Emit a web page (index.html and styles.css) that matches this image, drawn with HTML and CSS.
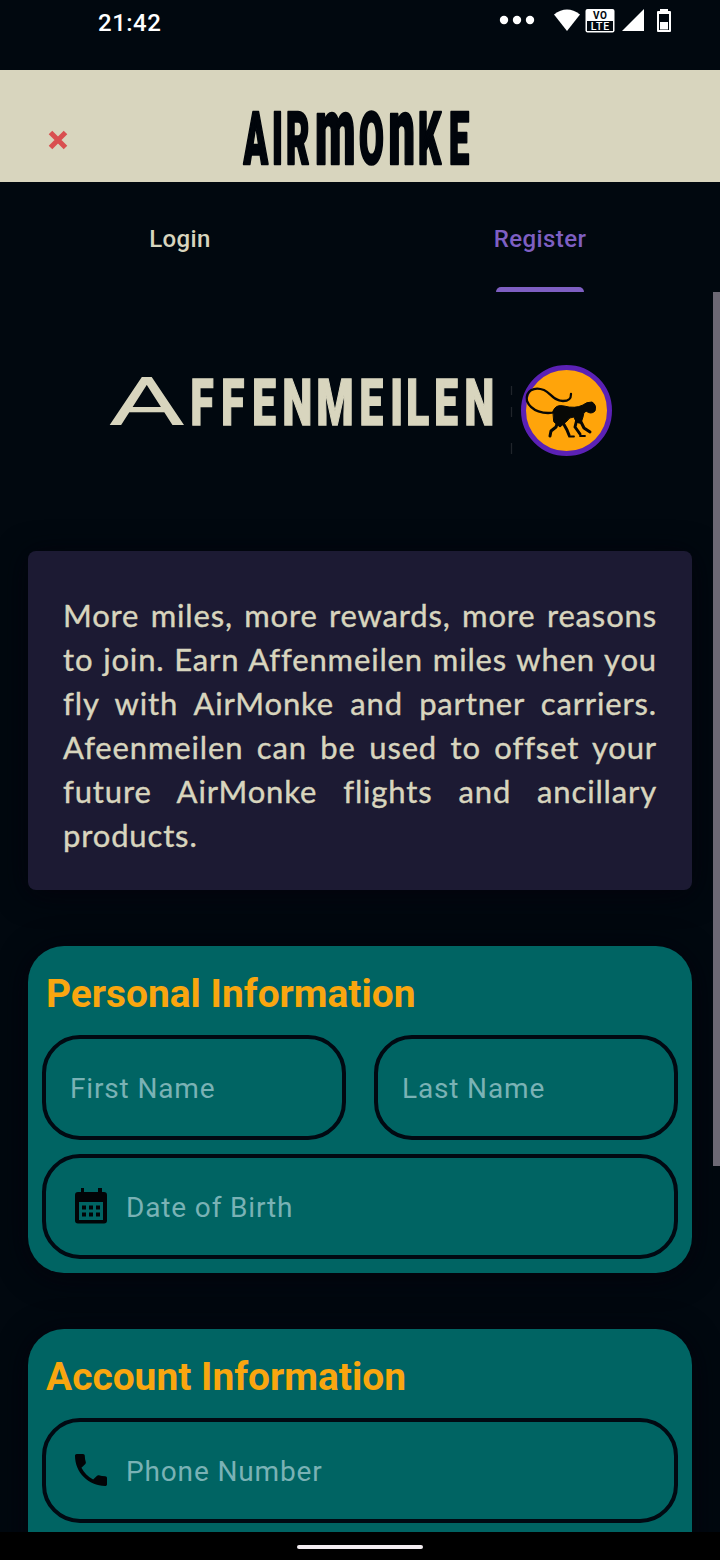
FILE: index.html
```html
<!DOCTYPE html>
<html lang="en">
<head>
<meta charset="utf-8">
<title>AirMonke – Register</title>
<link rel="stylesheet" href="styles.css">
</head>
<body>
<div class="screen">
  <div class="status">
    <span class="clock">21:42</span>
    <svg class="status-icons" width="176" height="30" viewBox="0 0 176 30">
      <g fill="#fff">
        <circle cx="8" cy="12" r="4.200"/><circle cx="21" cy="12" r="4.200"/><circle cx="34" cy="12" r="4.200"/>
        <path d="M58 6.500Q71 -3.500 84 6.500L71 23Z"/>
        <rect x="89.500" y="1" width="29" height="23.500" rx="2"/>
        <rect x="91" y="13" width="26" height="10" fill="#01080f"/>
        <path d="M148 1V23H126Z"/>
        <path d="M164 1h8v2h2q1 0 1 1v19q0 1-1 1h-12q-1 0-1-1V4q0-1 1-1h2Z"/>
      </g>
      <rect x="163" y="6" width="10" height="16" fill="#01080f"/>
      <rect x="164" y="14" width="8" height="7.500" fill="#fff"/>
      <text class="vo" x="104.300" y="10.600">VO</text>
      <text class="lte" x="104.300" y="21.700">LTE</text>
    </svg>
  </div>
  <header class="header">
    <svg class="close" width="20" height="20" viewBox="0 0 20 20"><path d="M2.500 2.500L17.500 17.500M17.500 2.500L2.500 17.500"/></svg>
    <svg class="wordmark" width="250" height="74" viewBox="0 0 250 74">
      <text transform="translate(0 56) scale(.5 1)" x="3 60 88 146 234 293 352 414">AIR<tspan class="tall">m</tspan>O<tspan class="tall">n</tspan>KE</text>
    </svg>
  </header>
  <nav class="tabs">
    <div class="tab">Login</div>
    <div class="tab active"><span>Register</span><i class="indicator"></i></div>
  </nav>
  <main class="content">
    <svg class="miles" width="510" height="100" viewBox="105 360 510 100">
      <text class="miles-a" transform="translate(108 425) scale(1.800 1)">A</text>
      <text class="miles-rest" transform="translate(0 424.500) scale(.65 1)" x="293 340.500 388 434.500 487 553 600.500 625 668 714.500">FFENMEILEN</text>
      <path d="M511.500 386v9M511.500 407v10M511.500 443v11" stroke="#20252b" stroke-width="1.300"/>
      <circle cx="566.500" cy="410.500" r="43" fill="#ffa40a" stroke="#5b21b5" stroke-width="5"/>
      <g stroke="#080806" stroke-linecap="round" stroke-linejoin="round" fill="none">
        <path stroke-width="2.300" d="M556 412C544 415 531 411 527 401C525 391 534 386 544 390C551 393 553 401 563 401C570 401 571 398 571 394"/>
        <path fill="#080806" stroke-width="1" d="M553 411Q556 404 564 406Q575 409 583 405Q586 402 592 402Q597 405 595 411Q591 415 586 411Q583 413 583 417L581 423Q576 424 574 417Q569 417 567 421L560 427L554 422Z"/>
        <path stroke-width="3" d="M558 421L556 427L551 431L550 436M562 421L567 430L569 435M577 419L575 427L580 434M580 420L584 428L590 432"/>
        <path stroke-width="1.800" d="M569 436.500h5M580 436h5"/>
      </g>
    </svg>
    <div class="intro">
      <div class="line">More miles, more rewards, more reasons</div>
      <div class="line">to join. Earn Affenmeilen miles when you</div>
      <div class="line">fly with AirMonke and partner carriers.</div>
      <div class="line">Afeenmeilen can be used to offset your</div>
      <div class="line">future AirMonke flights and ancillary</div>
      <div class="line last">products.</div>
    </div>
    <section class="panel">
      <h2>Personal Information</h2>
      <div class="row">
        <div class="field">First Name</div>
        <div class="field">Last Name</div>
      </div>
      <div class="field">
        <svg class="icon" width="32" height="36" viewBox="0 0 32 36">
          <path fill-rule="evenodd" d="M6 0h3v4h14V0h4v4h2q3 0 3 3v25.500q0 3-3 3H3q-3 0-3-3V7q0-3 3-3h3ZM4 14v18h24V14Z"/>
          <path d="M7 17.500h4v4H7zM14 17.500h4v4h-4zM21 17.500h4v4h-4zM7 24.500h4v4H7zM14 24.500h4v4h-4zM21 24.500h4v4h-4z"/>
        </svg>
        Date of Birth
      </div>
    </section>
    <section class="panel">
      <h2>Account Information</h2>
      <div class="field">
        <svg class="icon" width="32" height="32" viewBox="3 3 18 18"><path d="M6.620 10.790c1.440 2.830 3.760 5.140 6.590 6.590l2.200-2.200c.27-.27.67-.36 1.020-.24 1.120.37 2.330.57 3.570.57.550 0 1 .45 1 1V20c0 .55-.45 1-1 1C10.610 21 3 13.390 3 4c0-.55.45-1 1-1h3.500c.55 0 1 .45 1 1 0 1.250.2 2.450.57 3.570.11.350.03.740-.25 1.020l-2.200 2.200z"/></svg>
        Phone Number
      </div>
    </section>
    <div class="scrollbar"></div>
  </main>
  <div class="gesture"><div class="pill"></div></div>
</div>
</body>
</html>
```
FILE: styles.css
```css
* { box-sizing: border-box; }
body { margin: 0; background: #01080f; font-family: Roboto, sans-serif; }
.screen { width: 720px; height: 1560px; display: flex; flex-direction: column; overflow: hidden; }

.status { height: 70px; flex: none; display: flex; justify-content: space-between; padding: 8px 48px 0 98px; color: #fff; }
.clock { font-size: 24px; line-height: 31px; font-weight: 500; letter-spacing: .5px; }
.status-icons .vo { font: bold 10px Roboto, sans-serif; text-anchor: middle; fill: #01080f; letter-spacing: .5px; }
.status-icons .lte { font: 500 10.5px Roboto, sans-serif; text-anchor: middle; fill: #fff; letter-spacing: .8px; }

.header { height: 112px; flex: none; display: flex; align-items: flex-start; background: #d8d5be; padding: 38px 0 0 48px; }
.close { margin-top: 22px; fill: none; stroke: #d94f50; stroke-width: 5; stroke-linecap: butt; }
.wordmark { margin-left: 174px; overflow: visible; }
.wordmark text { font: 900 72px Roboto, sans-serif; fill: #01050b; stroke: #01050b; stroke-width: 2.5; stroke-linejoin: round; }
.wordmark .tall { font-size: 94px; }

.tabs { height: 110px; flex: none; display: grid; grid-template-columns: 1fr 1fr; }
.tab { display: flex; flex-direction: column; align-items: center; justify-content: space-between; padding-top: 43px; font-size: 24px; line-height: 29px; font-weight: 500; letter-spacing: .4px; color: #d8d5be; }
.tab.active { color: #7e5fc2; }
.indicator { width: 88px; height: 5px; border-radius: 5px 5px 0 0; background: #7e5fc2; }

.content { position: relative; flex: 1; min-height: 0; overflow: hidden; padding: 68px 28px 0; }
.miles { display: block; margin: 0 0 91px 77px; }
.miles text { fill: #d8d5be; }
.miles-a { font: 400 66px Roboto, sans-serif; }
.miles-rest { font: 900 65px Roboto, sans-serif; stroke: #d8d5be; stroke-width: 1.5; }

.intro { height: 339px; margin-bottom: 56px; padding: 42px 35px 0 35px; border-radius: 8px; background: #1c1a33; color: #d8d5be; font: 400 31px/44px Lato, sans-serif; -webkit-text-stroke: .4px #d8d5be; box-shadow: 0 4px 30px #04030c; }
.line { letter-spacing: .85px; white-space: nowrap; text-align: justify; text-align-last: justify; }
.line.last { text-align-last: left; }

.panel { height: 327px; margin-bottom: 56px; padding: 26px 14px 14px; border-radius: 36px; background: #006463; box-shadow: 0 4px 30px #04030c; display: flex; flex-direction: column; }
h2 { height: 63px; flex: none; margin: 0 0 0 4px; font-size: 38.9px; line-height: 43px; font-weight: 700; color: #f9a60f; }
.row { display: grid; grid-template-columns: 1fr 1fr; gap: 28px; margin-bottom: 14px; }
.field { height: 105px; flex: none; display: flex; align-items: center; gap: 19px; padding: 2px 0 0 24px; border: 4px solid #010912; border-radius: 38px; font-size: 28px; letter-spacing: .85px; color: #7ab2b5; }
.icon { flex: none; margin-left: 5px; margin-top: -4px; fill: #020407; }
.scrollbar { position: absolute; top: 0; right: 0; width: 7px; height: 874px; background: #6c6874; }

.gesture { height: 28px; flex: none; background: #000; display: flex; justify-content: center; padding-top: 13px; }
.pill { width: 126px; height: 4px; border-radius: 2px; background: #f3edf1; }
```
